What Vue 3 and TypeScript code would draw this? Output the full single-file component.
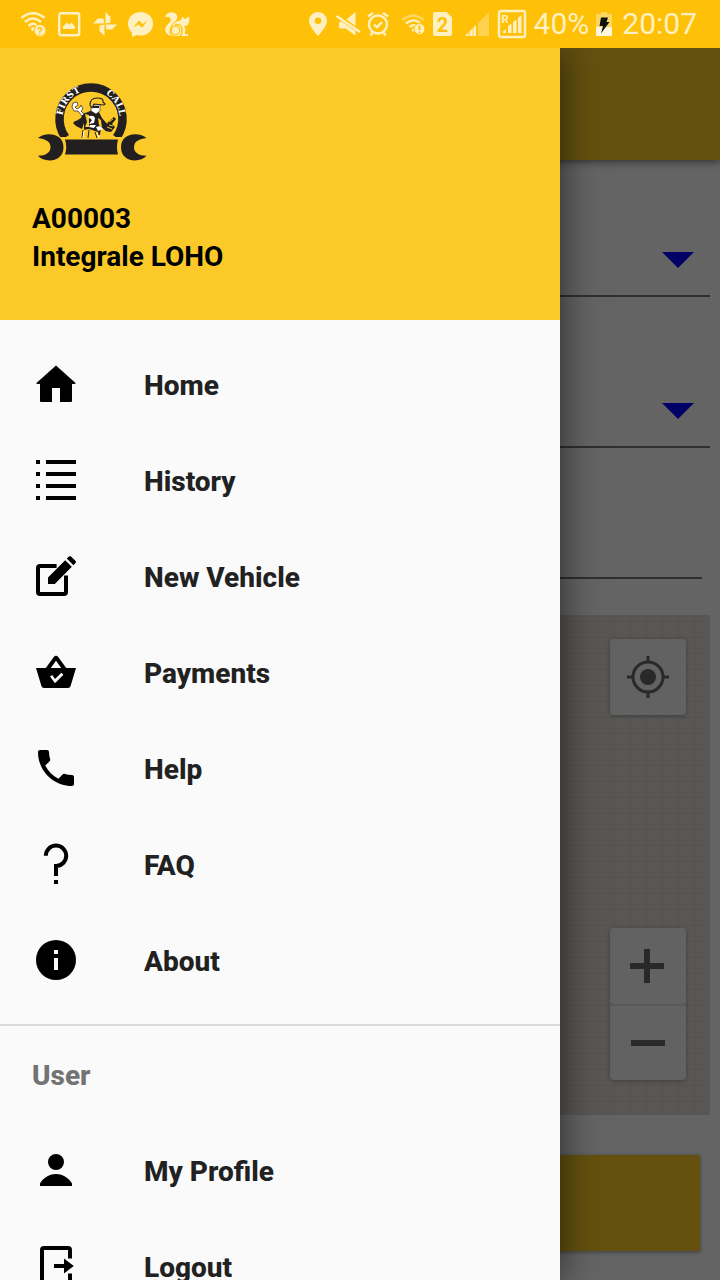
<script setup lang="ts">
import { ref } from 'vue'

interface MenuItem {
  label: string
  icon: string
}

const mainItems: MenuItem[] = [
  { label: 'Home', icon: 'home' },
  { label: 'History', icon: 'list' },
  { label: 'New Vehicle', icon: 'edit' },
  { label: 'Payments', icon: 'basket' },
  { label: 'Help', icon: 'phone' },
  { label: 'FAQ', icon: 'question' },
  { label: 'About', icon: 'info' },
]

const userItems: MenuItem[] = [
  { label: 'My Profile', icon: 'person' },
  { label: 'Logout', icon: 'logout' },
]

// Filled shapes, on a 24-unit grid
const fills: Record<string, string> = {
  home: 'M12 2.8 2.1 11.6Q3 12.3 4 11.9V20.5Q4 21 4.500 21H10V14h4v7h5.500Q20 21 20 20.500V11.900Q21 12.300 21.900 11.600Z',
  list: 'M2 2h2v2H2zM7 2h15v2H7zM2 8h2v2H2zM7 8h15v2H7zM2 14h2v2H2zM7 14h15v2H7zM2 20h2v2H2zM7 20h15v2H7z',
  edit: 'M8 12.700 16.600 4.100 19.900 7.400 11.400 16H8zM17.400 3.300 18.500 2.200Q19 1.800 19.500 2.200L21.800 4.500Q22.200 5 21.800 5.500L20.700 6.600z',
  basket: 'M2 10H6.900L10.800 4.600Q12 3.200 13.200 4.600L17.100 10H22L19.300 19Q19 20 18 20H6Q5 20 4.700 19zM9.400 10H14.600L12 6.400zM9 14.300 11.500 17.600 15.700 13.400 14.700 12.400 11.500 15.500 10.100 13.500z',
  phone: 'M6.620 10.790c1.440 2.830 3.760 5.140 6.590 6.590l2.200-2.200c.27-.27.67-.36 1.020-.24 1.120.37 2.330.57 3.570.57.55 0 1 .45 1 1V20c0 .55-.45 1-1 1-9.390 0-17-7.610-17-17 0-.55.45-1 1-1h3.500c.55 0 1 .45 1 1 0 1.250.2 2.450.57 3.570.11.35.03.74-.25 1.020z',
  question: 'M11 20h2v2h-2z',
  info: 'M12 2a10 10 0 1 0 0 20a10 10 0 0 0 0-20zM11 7h2v2h-2zM11 11h2v6h-2z',
  person: 'M12 4a4 4 0 1 0 0 8a4 4 0 0 0 0-8zM4 20V18.800C5.200 16.400 8.400 14 12 14S18.800 16.400 20 18.800V20z',
  logout: 'M16 8.300 20.900 12 16 15.700z',
}

// Outlined parts, 2 units thick
const strokes: Record<string, string> = {
  edit: 'M12.300 7H4Q3 7 3 8V20Q3 21 4 21H16Q17 21 17 20V11.700',
  question: 'M6.900 7.900A5.100 5.100 0 1 1 12 13V18',
  logout: 'M19 8.300V4Q19 3 18 3H6Q5 3 5 4V20Q5 21 6 21H18Q19 21 19 20V15.700M11 12H17',
}

const sections = [
  { title: '', items: mainItems },
  { title: 'User', items: userItems },
]

const vehicle = ref('')
const service = ref('')
const note = ref('')
</script>

<template>
  <div class="screen">
    <header class="status">
      <div class="notices">
        <svg class="glyph notice" viewBox="0 0 28 32" aria-hidden="true">
          <g class="line">
            <path d="M2.500 10Q14 .5 25.500 10" />
            <path d="M6 14Q14 7 22 14" />
            <path d="M9.500 18Q14 14 18 17.500" />
          </g>
          <circle cx="14" cy="21" r="2" />
          <circle class="badge" cx="21" cy="22.500" r="6" />
          <text class="cut" x="21" y="26.500" font-size="11">?</text>
        </svg>
        <svg class="glyph notice" viewBox="0 0 28 32" aria-hidden="true">
          <rect class="line" x="4.200" y="5.200" width="20" height="22" rx="2" />
          <path d="M8 21V18.500L12 14.500 14 16.500 16.500 14.500 20 18.500V21z" />
        </svg>
        <svg class="glyph notice" viewBox="0 0 28 32" aria-hidden="true">
          <path d="M14.500 4 19.500 9V14.500L14.500 15.500zM26 16.500 21 21.500H15.500L14.500 16.500zM13.500 28 8.500 23V17.500L13.500 16.500zM2 15.500 7 10.500H12.500L13.500 15.500z" />
        </svg>
        <svg class="glyph notice" viewBox="0 0 28 32" aria-hidden="true">
          <path d="M13.500 4C6.500 4 1 9 1 15.500C1 19.500 2.800 22.500 5 24.500V29L9.500 27C18 29.500 26 24 26 15.500C26 9 20.500 4 13.500 4z" />
          <path class="cut" d="M6 19.500 12 12.500 15.500 16 20.500 12.500 15 19.800 11.500 16.500z" />
        </svg>
        <svg class="glyph notice" viewBox="0 0 28 32" aria-hidden="true">
          <path d="M2 9.500C3 5 8 3.300 11.500 4.800C15.500 7 15 11 12 13.500C9 16 8 17.500 7 20C6 23 6.500 26 8.500 28C4 27 1.800 24 2.200 20.500C3 16.500 8 15 7.800 11.500C7.300 8.500 4 8 2 9.500z" />
          <path d="M9 18.500C10.500 14.500 14 13 18 12L19.500 8.500 22 11 26.300 8.500V13.500L24.500 17.500 21 18C23 20.500 22.800 23.500 21.500 26H25V28H10.500C7 26.500 7 22 9 18.500z" />
          <circle class="ring" cx="12.500" cy="22.500" r="4.300" />
          <path class="ring" d="M12 16.300Q19 16 19 22T16.500 28" />
        </svg>
      </div>

      <div class="system">
        <svg class="glyph sys" viewBox="0 0 30 32" aria-hidden="true">
          <path fill-rule="evenodd" d="M15 4C10 4 6 8 6 13C6 18.500 15 28 15 28S24 18.500 24 13C24 8 20 4 15 4zM15 9.500A3.300 3.300 0 1 1 15 16.100A3.300 3.300 0 0 1 15 9.500z" />
        </svg>
        <svg class="glyph sys" viewBox="0 0 30 32" aria-hidden="true">
          <path d="M13.500 11.500 22.500 4V18zM6 15.500Q6 13.500 8.500 13.500L22.500 23V27.500L12.500 20.500H7.500Q6 20.500 6 19z" />
          <path class="line" d="M3.500 8 27 24" />
        </svg>
        <svg class="glyph sys" viewBox="0 0 30 32" aria-hidden="true">
          <g class="line">
            <circle cx="15" cy="16.500" r="9" />
            <path d="M11 16.500 14 19.300 19 14M5 8.500 10 4.800M25 8.500 20 4.800M9.500 24.500 7.500 27.500M20.500 24.500 22.500 27.500" />
          </g>
        </svg>
        <svg class="glyph sys spaced" viewBox="0 0 30 32" aria-hidden="true">
          <path class="line faint" d="M3.500 12Q14 2.800 24.500 12" />
          <g class="line">
            <path d="M7 15.500Q14 9.500 21 15" />
            <path d="M10.500 19Q14 16 17 18" />
          </g>
          <circle cx="14.500" cy="22" r="1.800" />
          <circle class="badge" cx="20.500" cy="21" r="5.500" />
          <path class="gap" d="M20.500 17.500V22M20.500 23.500V25" />
        </svg>
        <svg class="glyph sim" viewBox="0 0 28 32" aria-hidden="true">
          <path d="M6 4H17.500L23 9.500V26Q23 28 21 28H6Q4 28 4 26V6Q4 4 6 4z" />
          <text class="cut" x="13.500" y="23.500" font-size="20">2</text>
        </svg>
        <svg class="glyph signal" viewBox="0 0 40 32" aria-hidden="true">
          <path class="faint-fill" d="M8 28 19 17V28zM21 28V15L32 4V28z" />
          <path d="M8 28 11.500 24.500V28zM13 28V23L15.500 20.500V28zM16.500 28V19.500L19 17V28z" />
        </svg>
        <svg class="glyph sys" viewBox="0 0 30 32" aria-hidden="true">
          <rect class="line" x="2" y="3" width="26" height="26" rx="2" />
          <text x="8" y="15" font-size="11">R</text>
          <path d="M6 25V23.500L9 21V25zM11 25V18L14.500 15.500V25zM16 25V14L19.500 11.500V25zM21 25V9.500L24.500 7.500V25z" />
        </svg>
        <span class="percent">40%</span>
        <svg class="battery" viewBox="0 0 16 24" aria-hidden="true">
          <path class="level-empty" d="M5 0H11V2H16V15H0V2H5z" />
          <path class="level-full" d="M0 15H16V24H0z" />
          <path class="bolt" d="M5 5.500H12L10.500 10H13.500L5 21.500 7 14H3.500z" />
        </svg>
        <time class="clock">20:07</time>
      </div>
    </header>

    <div class="stage">
      <div class="page">
        <div class="toolbar"></div>
        <form class="form" @submit.prevent>
          <div class="field first">
            <select v-model="vehicle" class="control" aria-label="Vehicle"></select>
            <span class="caret"></span>
          </div>
          <div class="field">
            <select v-model="service" class="control" aria-label="Service"></select>
            <span class="caret"></span>
          </div>
          <input v-model="note" class="note" type="text" aria-label="Details" />
          <div class="map">
            <button class="map-button" type="button" aria-label="My location">
              <svg class="map-icon" viewBox="0 0 44 44">
                <circle cx="22" cy="22" r="8" fill="#666" />
                <path d="M22 7A15 15 0 1 0 22 37A15 15 0 0 0 22 7zM22 1V7M22 37V43M1 22H7M37 22H43" fill="none" stroke="#666" stroke-width="3" />
              </svg>
            </button>
            <div class="zoom">
              <button class="map-button" type="button" aria-label="Zoom in">
                <svg class="map-icon" viewBox="0 0 44 44"><path d="M4 22H38M21 5V39" stroke="#666" stroke-width="6" /></svg>
              </button>
              <button class="map-button" type="button" aria-label="Zoom out">
                <svg class="map-icon" viewBox="0 0 44 44"><path d="M5 22H39" stroke="#666" stroke-width="6" /></svg>
              </button>
            </div>
          </div>
          <button class="submit" type="submit" aria-label="Request service"></button>
        </form>
      </div>
      <div class="scrim"></div>

      <aside class="drawer">
        <div class="account">
          <svg class="logo" viewBox="0 0 120 88" role="img" aria-label="First Call">
            <defs>
              <path id="rim" d="M30.500 38.500A28.500 28.500 0 0 1 87.500 38.500" />
            </defs>
            <path d="M33.500 57.500A31.500 31.500 0 1 1 84.500 57.500" fill="none" stroke="#231f20" stroke-width="8.500" />
            <path d="M25 60H93V57H25z" fill="#fbca28" />
            <text class="rim-text"><textPath href="#rim" startOffset="3">FIRST</textPath></text>
            <text class="rim-text"><textPath href="#rim" startOffset="60">CALL</textPath></text>
            <path d="M33 59.500H86Q84 67 86 74.500H33Q35.500 67 33 59.500z" fill="#231f20" />
            <path id="head" d="M6 58C12 52 31.500 51.500 31.500 67.300C31.500 83 12 83 6 75.800C13 76 18.500 73 18.500 67.300C18.500 61 13 59 6 58z" fill="#231f20" />
            <use href="#head" transform="translate(120.500) scale(-1 1)" />
            <!-- raised arm and shoulders -->
            <path d="M44 40 50 34 56 32 60 30 67 32 70 38 76 45 74 51 69 47 68 55H52V43L50 49 44 46 41 43z" fill="#231f20" />
            <path d="M41 40 46 34 51 33 49 38 44 41zM53 34 55 42 53 47 57 47 57 35zM66 38 67 45 70 48 69 40z" fill="#fbca28" />
            <!-- spanner -->
            <path d="M41 23 45 22 46 25 43 27 45 29 48 27 49 25 51 29 49 31 52 34 50 36 46 31 42 31 40 27z" fill="#fff" stroke="#231f20" stroke-width=".7" />
            <!-- cap and face -->
            <path d="M59 25 68 25 68 31 64 34 59 31z" fill="#fff" stroke="#231f20" stroke-width=".6" />
            <path d="M58 25Q58 18 65 18T71 22L73 24 72 25 62 24 60 28z" fill="#fbca28" stroke="#231f20" stroke-width="1.100" />
            <path d="M61 26H67V28H61z" fill="#231f20" />
            <!-- overalls -->
            <path d="M56 37Q61 34 63 38L62 43 57 44 60 40zM64 47 68 46 71 49 66 51zM58 45 64 45 62 48 57 47z" fill="#fff" />
            <path d="M51 50 57 49 66 52 67 58H50z" fill="#fbca28" />
            <path d="M51 50 50 58M57 50 56 58M63 52 65 58" fill="none" stroke="#231f20" stroke-width="1" />
            <path d="M52 51 51 58M65 53 67 58" stroke="#fff" stroke-width="1" />
            <!-- toolbox -->
            <path d="M76 42 82 37 84 39 80 44 83 47 79 52 73 51 73 48z" fill="#231f20" />
            <path d="M77 42 81 39M75 47 80 49M77 45 81 46" stroke="#fbca28" stroke-width="1" />
          </svg>
          <div class="identity">
            <div>A00003</div>
            <div>Integrale LOHO</div>
          </div>
        </div>

        <nav class="menu">
          <section v-for="section in sections" :key="section.title" class="group">
            <h2 v-if="section.title" class="group-title">{{ section.title }}</h2>
            <a v-for="item in section.items" :key="item.label" class="item" href="#">
              <svg class="item-icon" viewBox="0 0 24 24" aria-hidden="true">
                <path :d="fills[item.icon]" fill-rule="evenodd" />
                <path v-if="strokes[item.icon]" :d="strokes[item.icon]" fill="none" stroke="#000" stroke-width="2" />
              </svg>
              <span class="item-label">{{ item.label }}</span>
            </a>
          </section>
        </nav>
      </aside>
    </div>
  </div>
</template>

<style>
body {
  margin: 0;
}
</style>

<style scoped>
.screen {
  display: flex;
  flex-direction: column;
  height: 100vh;
  overflow: hidden;
  font-family: Roboto, "Liberation Sans", sans-serif;
  background: #fafafa;
}

.status {
  display: flex;
  flex: none;
  align-items: center;
  justify-content: space-between;
  height: 48px;
  padding: 0 23px 0 19px;
  box-sizing: border-box;
  background: #ffc107;
  color: #fff0c1;
  font-size: 30px;
  line-height: 48px;
}

.notices,
.system {
  display: flex;
  align-items: center;
}

.notices {
  gap: 8px;
}

.glyph {
  display: block;
  height: 32px;
  fill: #fff0c1;
}

.notice {
  width: 28px;
}

.sys {
  width: 30px;
}

.spaced {
  margin-left: 6px;
}

.sim {
  width: 28px;
}

.signal {
  width: 40px;
}

.glyph text {
  font-weight: 700;
  text-anchor: middle;
}

.line {
  fill: none;
  stroke: #fff0c1;
  stroke-width: 2.4;
}

.faint {
  stroke: #ffd75f;
}

.faint-fill {
  fill: #ffd34f;
}

.badge {
  stroke: #ffc107;
  stroke-width: 1;
}

.glyph .cut {
  fill: #ffc107;
}

.ring {
  fill: none;
  stroke: #ffc107;
  stroke-width: 1.3;
}

.gap {
  stroke: #ffc107;
  stroke-width: 2;
}

.percent {
  margin-left: 7px;
}

.battery {
  width: 16px;
  height: 24px;
  margin: 0 10px 0 7px;
}

.level-empty {
  fill: #ffd75f;
}

.level-full {
  fill: #fff6dc;
}

.bolt {
  fill: #111;
}

.stage {
  position: relative;
  flex: 1;
  min-height: 0;
  overflow: hidden;
}

.page {
  display: flex;
  flex-direction: column;
  height: 100%;
}

.toolbar {
  position: relative;
  flex: none;
  height: 112px;
  background: #fbca28;
  box-shadow: 0 2px 8px rgba(0, 0, 0, 0.5);
}

.form {
  display: flex;
  flex: 1;
  flex-direction: column;
  min-height: 0;
  padding: 0 10px 29px;
}

.field {
  position: relative;
  display: flex;
  align-items: flex-end;
  justify-content: flex-end;
  height: 151px;
  padding: 0 16px 27px 0;
  box-sizing: border-box;
  border-bottom: 2px solid #777;
}

.first {
  height: 137px;
}

.control {
  position: absolute;
  inset: 0;
  width: 100%;
  border: 0;
  appearance: none;
  background: transparent;
}

.caret {
  border: 16px solid transparent;
  border-top-color: #0000ff;
  border-bottom: 0;
}

.note {
  height: 131px;
  margin: 0 8px 36px 0;
  padding: 0;
  box-sizing: border-box;
  border: 0;
  border-bottom: 2px solid #777;
  background: transparent;
}

.map {
  display: flex;
  flex: 1;
  flex-direction: column;
  align-items: flex-end;
  justify-content: space-between;
  padding: 24px 24px 35px;
  box-sizing: border-box;
  background-color: #dfdad4;
  background-image:
    linear-gradient(90deg, #d2cdc7 1px, transparent 1px),
    linear-gradient(#d2cdc7 1px, transparent 1px);
  background-position: 12px 6px;
  background-size: 16px 16px;
}

.map-button {
  display: flex;
  align-items: center;
  justify-content: center;
  width: 76px;
  height: 76px;
  padding: 0;
  border: 0;
  border-radius: 4px;
  background: #f5f5f5;
  box-shadow: 0 1px 4px rgba(0, 0, 0, 0.3);
}

.map-icon {
  width: 44px;
  height: 44px;
}

.zoom {
  display: flex;
  flex-direction: column;
  border-radius: 4px;
  box-shadow: 0 1px 4px rgba(0, 0, 0, 0.3);
}

.zoom .map-button {
  box-shadow: none;
}

.zoom .map-button + .map-button {
  border-top: 2px solid #dedede;
  border-radius: 0 0 4px 4px;
}

.submit {
  flex: none;
  height: 96px;
  margin: 40px 10px 0 0;
  border: 0;
  background: #fbca28;
  box-shadow: 0 1px 4px rgba(0, 0, 0, 0.4);
}

.scrim {
  position: absolute;
  inset: 0;
  background: rgba(0, 0, 0, 0.6);
}

.drawer {
  position: absolute;
  inset: 0 160px 0 0;
  overflow: hidden;
  background: #fafafa;
  box-shadow: 0 0 36px rgba(0, 0, 0, 0.6);
}

.account {
  height: 272px;
  padding: 32px 32px 0;
  box-sizing: border-box;
  background: #fbca28;
}

.logo {
  display: block;
  width: 120px;
  height: 88px;
}

.rim-text {
  fill: #fff;
  font-family: "DejaVu Serif", serif;
  font-size: 9px;
  font-weight: 700;
}

.identity {
  margin-top: 32px;
  color: #000;
  font-size: 28px;
  font-weight: 700;
  line-height: 38px;
}

.group {
  padding: 16px 0;
}

.group + .group {
  padding-top: 0;
  border-top: 2px solid #dadada;
}

.group-title {
  margin: 0;
  padding: 4px 32px 0;
  color: #737373;
  font-size: 28px;
  font-weight: 800;
  line-height: 92px;
}

.item {
  display: flex;
  align-items: center;
  gap: 64px;
  height: 96px;
  padding: 0 32px;
  color: #212121;
  font-size: 28px;
  font-weight: 800;
  text-decoration: none;
}

.item-label {
  padding-top: 2px;
}

.item-icon {
  flex: none;
  width: 48px;
  height: 48px;
}
</style>
